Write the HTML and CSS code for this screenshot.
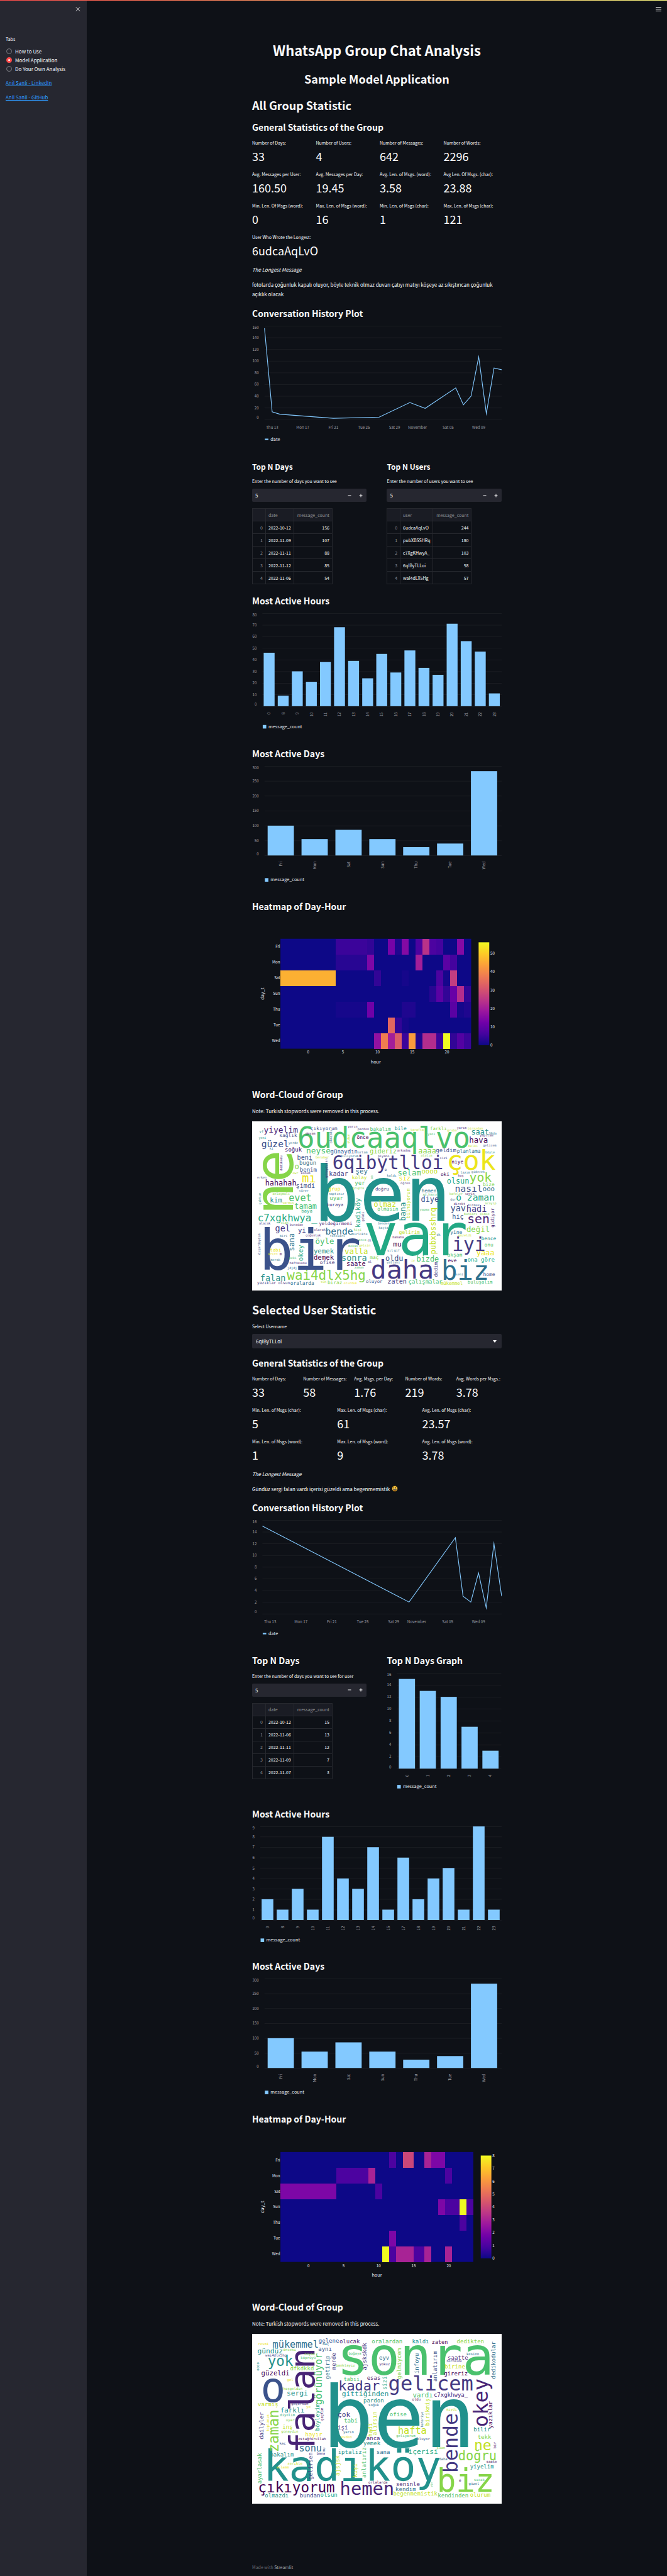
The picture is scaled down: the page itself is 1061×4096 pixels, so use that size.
FILE: index.html
```html
<!DOCTYPE html>
<html lang="en">
<head>
<meta charset="utf-8">
<meta name="viewport" content="width=device-width, initial-scale=1">
<title>WhatsApp Group Chat Analysis</title>
<link rel="stylesheet" href="styles.css">
</head>
<body>
<div class="decoration"></div>
<div class="app">
  <aside class="sidebar">
    <button class="icon-button close" type="button" aria-label="Close sidebar">
      <svg viewBox="0 0 8 8"><path d="M1 1l6 6M7 1l-6 6" fill="none" stroke="currentColor"/></svg>
    </button>
    <fieldset class="tabs">
      <legend>Tabs</legend>
      <label class="tab"><input type="radio" name="tab">How to Use</label>
      <label class="tab"><input type="radio" name="tab" checked>Model Application</label>
      <label class="tab"><input type="radio" name="tab">Do Your Own Analysis</label>
    </fieldset>
    <p class="side-link"><a href="#linkedin">Anil Sanli - LinkedIn</a></p>
    <p class="side-link"><a href="#github">Anil Sanli - GitHub</a></p>
  </aside>

  <main class="main">
    <button class="icon-button menu" type="button" aria-label="Menu">
      <svg viewBox="0 0 10 8"><path d="M0 1.500h9M0 4.500h9M0 7.500h9" fill="none" stroke="currentColor"/></svg>
    </button>
    <div class="content">
      <h1 class="title">WhatsApp Group Chat Analysis</h1>
      <h2 class="header centered">Sample Model Application</h2>

      <h2 class="header">All Group Statistic</h2>
      <h3 class="subheader">General Statistics of the Group</h3>
      <dl class="metrics four">
        <div><dt>Number of Days:</dt><dd>33</dd></div>
        <div><dt>Number of Users:</dt><dd>4</dd></div>
        <div><dt>Number of Messages:</dt><dd>642</dd></div>
        <div><dt>Number of Words:</dt><dd>2296</dd></div>
        <div><dt>Avg. Messages per User:</dt><dd>160.50</dd></div>
        <div><dt>Avg. Messages per Day:</dt><dd>19.45</dd></div>
        <div><dt>Avg. Len. of Msgs. (word):</dt><dd>3.58</dd></div>
        <div><dt>Avg Len. Of Msgs. (char):</dt><dd>23.88</dd></div>
        <div><dt>Min. Len. Of Msgs (word):</dt><dd>0</dd></div>
        <div><dt>Max. Len. of Msgs (word):</dt><dd>16</dd></div>
        <div><dt>Min. Len. of Msgs (char):</dt><dd>1</dd></div>
        <div><dt>Max. Len. of Msgs (char):</dt><dd>121</dd></div>
        <div class="wide"><dt>User Who Wrote the Longest:</dt><dd>6udcaAqLvO</dd></div>
      </dl>
      <p class="text"><em>The Longest Message</em></p>
      <p class="text">fotolarda çoğunluk kapalı oluyor, böyle teknik olmaz duvarı çatıyı matıyı köşeye az sıkıştırıcan çoğunluk açıklık olacak</p>

      <h3 class="subheader">Conversation History Plot</h3>
      <svg class="chart" id="group-history"></svg>

      <div class="columns">
        <section>
          <h4 class="minor">Top N Days</h4>
          <label class="field-label" for="n-days">Enter the number of days you want to see</label>
          <div class="stepper">
            <input id="n-days" type="text" inputmode="numeric" value="5">
            <button type="button" aria-label="Decrease"><svg viewBox="0 0 6 6"><path d="M0.500 3h5" stroke="currentColor"/></svg></button>
            <button type="button" aria-label="Increase"><svg viewBox="0 0 6 6"><path d="M0.500 3h5M3 .5v5" stroke="currentColor"/></svg></button>
          </div>
          <table class="data">
            <thead><tr><th></th><th>date</th><th class="num">message_count</th></tr></thead>
            <tbody>
              <tr><th>0</th><td>2022-10-12</td><td class="num">156</td></tr>
              <tr><th>1</th><td>2022-11-09</td><td class="num">107</td></tr>
              <tr><th>2</th><td>2022-11-11</td><td class="num">88</td></tr>
              <tr><th>3</th><td>2022-11-12</td><td class="num">85</td></tr>
              <tr><th>4</th><td>2022-11-06</td><td class="num">54</td></tr>
            </tbody>
          </table>
        </section>
        <section>
          <h4 class="minor">Top N Users</h4>
          <label class="field-label" for="n-users">Enter the number of users you want to see</label>
          <div class="stepper">
            <input id="n-users" type="text" inputmode="numeric" value="5">
            <button type="button" aria-label="Decrease"><svg viewBox="0 0 6 6"><path d="M0.500 3h5" stroke="currentColor"/></svg></button>
            <button type="button" aria-label="Increase"><svg viewBox="0 0 6 6"><path d="M0.500 3h5M3 .5v5" stroke="currentColor"/></svg></button>
          </div>
          <table class="data users">
            <thead><tr><th></th><th>user</th><th class="num">message_count</th></tr></thead>
            <tbody>
              <tr><th>0</th><td>6udcaAqLvO</td><td class="num">244</td></tr>
              <tr><th>1</th><td>pubXBSSHRq</td><td class="num">180</td></tr>
              <tr><th>2</th><td>c7XgKHwyA_</td><td class="num">103</td></tr>
              <tr><th>3</th><td>6qIByTLLoi</td><td class="num">58</td></tr>
              <tr><th>4</th><td>waI4dLX5Hg</td><td class="num">57</td></tr>
            </tbody>
          </table>
        </section>
      </div>

      <h3 class="subheader after-table">Most Active Hours</h3>
      <svg class="chart" id="group-hours"></svg>
      <h3 class="subheader">Most Active Days</h3>
      <svg class="chart" id="group-days"></svg>
      <h3 class="subheader">Heatmap of Day-Hour</h3>
      <svg class="chart" id="group-heatmap"></svg>
      <h3 class="subheader">Word-Cloud of Group</h3>
      <p class="text">Note: Turkish stopwords were removed in this process.</p>
      <svg class="chart cloud" id="group-cloud"></svg>

      <h2 class="header">Selected User Statistic</h2>
      <label class="field-label" for="username">Select Username</label>
      <div class="select">
        <select id="username"><option>6qIByTLLoi</option><option>6udcaAqLvO</option><option>pubXBSSHRq</option><option>c7XgKHwyA_</option></select>
        <svg class="caret" viewBox="0 0 6 4"><path d="M0 0h6l-3 4z" fill="currentColor"/></svg>
      </div>
      <h3 class="subheader">General Statistics of the Group</h3>
      <dl class="metrics five">
        <div><dt>Number of Days:</dt><dd>33</dd></div>
        <div><dt>Number of Messages:</dt><dd>58</dd></div>
        <div><dt>Avg. Msgs. per Day:</dt><dd>1.76</dd></div>
        <div><dt>Number of Words:</dt><dd>219</dd></div>
        <div><dt>Avg. Words per Msgs.:</dt><dd>3.78</dd></div>
      </dl>
      <dl class="metrics three">
        <div><dt>Min. Len. of Msgs (char):</dt><dd>5</dd></div>
        <div><dt>Max. Len. of Msgs (char):</dt><dd>61</dd></div>
        <div><dt>Avg. Len. of Msgs (char):</dt><dd>23.57</dd></div>
        <div><dt>Min. Len. of Msgs (word):</dt><dd>1</dd></div>
        <div><dt>Max. Len. of Msgs (word):</dt><dd>9</dd></div>
        <div><dt>Avg. Len. of Msgs (word):</dt><dd>3.78</dd></div>
      </dl>
      <p class="text"><em>The Longest Message</em></p>
      <p class="text with-emoji">Gündüz sergi falan vardı içerisi güzeldi ama begenmemistik
        <svg class="emoji" viewBox="0 0 20 20" role="img" aria-label="grinning face"><circle cx="10" cy="10" r="9" fill="#ffc83d" stroke="#2a1d05" stroke-width="1.500"/><ellipse cx="7" cy="7.500" rx="1.200" ry="2" fill="#2a1d05"/><ellipse cx="13" cy="7.500" rx="1.200" ry="2" fill="#2a1d05"/><path d="M4.500 11h11a5.500 5.500 0 0 1-11 0z" fill="#2a1d05"/><path d="M5 11h10v1.600H5z" fill="#fff"/><path d="M7.500 15a3.500 3 0 0 1 5 0 5 5 0 0 1-5 0z" fill="#e8332c"/></svg></p>

      <h3 class="subheader">Conversation History Plot</h3>
      <svg class="chart" id="user-history"></svg>

      <div class="columns">
        <section>
          <h3 class="subheader">Top N Days</h3>
          <label class="field-label" for="n-user-days">Enter the number of days you want to see for user</label>
          <div class="stepper">
            <input id="n-user-days" type="text" inputmode="numeric" value="5">
            <button type="button" aria-label="Decrease"><svg viewBox="0 0 6 6"><path d="M0.500 3h5" stroke="currentColor"/></svg></button>
            <button type="button" aria-label="Increase"><svg viewBox="0 0 6 6"><path d="M0.500 3h5M3 .5v5" stroke="currentColor"/></svg></button>
          </div>
          <table class="data">
            <thead><tr><th></th><th>date</th><th class="num">message_count</th></tr></thead>
            <tbody>
              <tr><th>0</th><td>2022-10-12</td><td class="num">15</td></tr>
              <tr><th>1</th><td>2022-11-06</td><td class="num">13</td></tr>
              <tr><th>2</th><td>2022-11-11</td><td class="num">12</td></tr>
              <tr><th>3</th><td>2022-11-09</td><td class="num">7</td></tr>
              <tr><th>4</th><td>2022-11-07</td><td class="num">3</td></tr>
            </tbody>
          </table>
        </section>
        <section>
          <h3 class="subheader">Top N Days Graph</h3>
          <svg class="chart" id="user-top"></svg>
        </section>
      </div>

      <h3 class="subheader">Most Active Hours</h3>
      <svg class="chart" id="user-hours"></svg>
      <h3 class="subheader">Most Active Days</h3>
      <svg class="chart" id="user-days"></svg>
      <h3 class="subheader">Heatmap of Day-Hour</h3>
      <svg class="chart" id="user-heatmap"></svg>
      <h3 class="subheader">Word-Cloud of Group</h3>
      <p class="text">Note: Turkish stopwords were removed in this process.</p>
      <svg class="chart cloud" id="user-cloud"></svg>

      <footer class="footer">Made with <a href="#streamlit">Streamlit</a></footer>
    </div>
  </main>
</div>
<script src="charts.js"></script>
</body>
</html>
```

FILE: styles.css
```css
* { box-sizing: border-box; }

body {
  margin: 0;
  background: #0e1117;
  color: #fafafa;
  font-family: "Noto Sans CJK SC", "Noto Sans", sans-serif;
  font-size: 8px;
  line-height: 15px;
}

h1, h2, h3, h4, p, dl, dd { margin: 0; }

.decoration {
  position: absolute;
  top: 0;
  left: 0;
  right: 0;
  height: 1px;
  background: linear-gradient(90deg, #ff4b4b, #fffd80);
}

.app { display: flex; min-height: 100vh; }

/* Sidebar */
.sidebar { flex: 0 0 13%; background: #262730; padding: 10px 9px; }

.icon-button {
  display: block;
  padding: 0;
  border: 0;
  background: none;
  color: #fafafa;
}
.icon-button svg { display: block; }
.close { margin: 0 0 0 auto; width: 9px; height: 9px; }
.close svg { width: 8px; height: 9px; }

.tabs { margin: 37px 0 0; padding: 0; border: 0; }
.tabs legend { padding: 0; font-size: 7px; line-height: 13px; margin-bottom: 5px; }
.tab { display: flex; align-items: center; gap: 5px; height: 14px; padding-left: 1px; white-space: nowrap; }
.tab input {
  appearance: none;
  margin: 0;
  width: 9px;
  height: 9px;
  border: 1px solid #7f8086;
  border-radius: 50%;
}
.tab input:checked { border: 3px solid #ff4b4b; background: #fff; }
.side-link { margin-top: 8px; }
.side-link a { color: #2e9aff; }

/* Main column */
.main { flex: 1; min-width: 0; position: relative; }
.menu { position: absolute; top: 10px; right: 8px; width: 10px; height: 8px; }
.menu svg { width: 10px; height: 8px; }
.content { max-width: 397px; margin: 0 auto; padding: 54px 0 7px; }

.title { padding: 10px 0; font-size: 22px; line-height: 30px; text-align: center; font-weight: 700; }
.header { padding: 9px 0; font-size: 18px; line-height: 24px; font-weight: 600; }
.centered { text-align: center; }
.subheader { padding: 5px 0 9px; font-size: 14px; line-height: 19px; font-weight: 600; }
.minor { padding: 5px 0 9px; font-size: 12px; line-height: 16px; font-weight: 600; }
.after-table { margin-top: 3px; }
.text { margin-bottom: 9px; }
.with-emoji { display: flex; align-items: center; gap: 3px; height: 14px; }

.metrics { display: grid; column-gap: 9px; }
.four { grid-template-columns: repeat(4, 1fr); }
.five { grid-template-columns: repeat(5, 1fr); }
.three { grid-template-columns: repeat(3, 1fr); }
.metrics div { min-width: 0; padding-bottom: 9px; }
.metrics .wide { grid-column: 1 / -1; }
.metrics dt { font-size: 7px; line-height: 13px; white-space: nowrap; }
.metrics dd { font-size: 18px; line-height: 28px; }

.columns { display: grid; grid-template-columns: 1fr 1fr; column-gap: 32px; }

.field-label { display: block; margin-bottom: 5px; font-size: 7px; line-height: 13px; }

.stepper { display: flex; height: 21px; margin-bottom: 10px; border-radius: 2px; background: #262730; }
.stepper input {
  flex: 1;
  min-width: 0;
  padding: 0 5px;
  border: 0;
  background: none;
  color: inherit;
  font: inherit;
}
.stepper button {
  display: grid;
  place-items: center;
  width: 18px;
  padding: 0;
  border: 0;
  background: none;
  color: #fafafa;
}
.stepper svg { width: 6px; height: 6px; }

.data { width: 128px; margin-bottom: 9px; border-collapse: collapse; font-size: 7px; line-height: 12px; }
.data.users { width: 135px; }
.data th, .data td { height: 20px; padding: 0 4px; border: 1px solid #26282e; font-weight: 400; text-align: left; }
.data th { color: #8f9196; }
.data thead th { background: #1a1c24; }
.data th:first-child { width: 21px; text-align: right; }
.data .num { width: 61px; text-align: right; }

.select { position: relative; margin-bottom: 9px; }
.select select {
  display: block;
  appearance: none;
  width: 100%;
  height: 23px;
  padding: 0 6px;
  border: 0;
  border-radius: 2px;
  background: #262730;
  color: inherit;
  font: inherit;
}
.caret { position: absolute; right: 8px; top: 10px; width: 6px; height: 4px; }

.emoji { width: 10px; height: 10px; }

/* Charts */
.chart { display: block; width: 100%; margin-bottom: 9px; }
.chart text { font-size: 11px; fill: #e6eaf1; }
.chart .axis { fill: #9a9ba0; }
.chart .legend { font-size: 13px; }
.chart .axis-title { font-size: 13px; }
.grid { stroke: #26282d; stroke-width: 1; }
.line { fill: none; stroke: #83c9ff; stroke-width: 2; stroke-miterlimit: 10; }
.bar { fill: #83c9ff; }
.cloud { background: #fff; }
.cloud text { font-family: "DejaVu Sans Mono", monospace; }

.footer { margin-top: 95px; font-size: 7px; line-height: 12px; color: #6a6c72; }
.footer a { color: #a3a8b4; text-decoration: none; }
```

FILE: charts.js
```js
const NS = "http://www.w3.org/2000/svg";
const DAYS = ["Fri", "Mon", "Sat", "Sun", "Thu", "Tue", "Wed"];

function add(parent, tag, attrs, text) {
  const node = document.createElementNS(NS, tag);
  for (const key in attrs) node.setAttribute(key, attrs[key]);
  if (text !== undefined) node.textContent = text;
  parent.appendChild(node);
  return node;
}

function open(id, width, height) {
  const svg = document.getElementById(id);
  svg.setAttribute("viewBox", `0 0 ${width} ${height}`);
  return svg;
}

/* Horizontal grid lines and value labels; returns the value-to-y function. */
function valueAxis(svg, c) {
  const y = v => c.top + c.plot * (1 - v / c.max);
  for (let v = 0; v <= c.max; v += c.step) {
    const line = Math.round(y(v)) + 0.5;
    add(svg, "line", { class: "grid", x1: c.left, x2: c.width, y1: line, y2: line });
    const shift = v === 0 ? -1 : v === c.max ? 8 : 4;
    add(svg, "text", { class: "axis", x: c.left - 16, y: y(v) + shift, "text-anchor": "end" }, v);
  }
  return y;
}

function legend(svg, c, name, h) {
  const y = c.top + c.plot + c.legend;
  add(svg, "rect", { class: "bar", x: c.left + 1, y: y - h / 2, width: 10, height: h });
  add(svg, "text", { class: "legend", x: c.left + 17, y: y + 4 }, name);
}

/* Points are [days since 12 October, message count]. */
function lineChart(id, c, points) {
  c = Object.assign({ width: 704, top: 2, plot: 264, height: 356 }, c);
  const svg = open(id, c.width, c.height);
  const y = valueAxis(svg, c);
  const x = d => c.left + (c.width - c.left) * d / 31;
  const ticks = { 1: "Thu 13", 5: "Mon 17", 9: "Fri 21", 13: "Tue 25", 17: "Sat 29", 20: "November", 24: "Sat 05", 28: "Wed 09" };
  for (const d in ticks) {
    add(svg, "text", { class: "axis", x: x(d), y: c.top + c.plot + 26, "text-anchor": "middle" }, ticks[d]);
  }
  add(svg, "polyline", { class: "line", points: points.map(p => `${x(p[0])},${y(p[1])}`).join(" ") });
  legend(svg, c, "date", 4);
}

function barChart(id, c, labels, values) {
  c = Object.assign({ width: 704, top: 2, plot: 264, height: 356 }, c);
  const svg = open(id, c.width, c.height);
  const y = valueAxis(svg, c);
  const band = (c.width - c.left) / values.length;
  const bar = band * 0.775;
  values.forEach((v, i) => {
    const mid = c.left + band * (i + 0.48);
    add(svg, "rect", { class: "bar", x: mid - bar / 2, y: y(v), width: bar, height: y(0) - y(v) });
    const ly = y(0) + 17;
    add(svg, "text", { class: "axis", x: mid + 4, y: ly, "text-anchor": "end", transform: `rotate(-90 ${mid + 4} ${ly})` }, labels[i]);
  });
  legend(svg, c, "message_count", 10);
}

const PLASMA = ["0d0887", "46039f", "7201a8", "9c179e", "bd3786", "d8576b", "ed7953", "fb9f3a", "fdca26", "f0f921"];

function plasma(t) {
  const p = Math.min(t * 9, 8.999), i = Math.floor(p), f = p - i;
  const part = (hex, k) => parseInt(hex.substr(k * 2, 2), 16);
  return "rgb(" + [0, 1, 2].map(k => Math.round(part(PLASMA[i], k) * (1 - f) + part(PLASMA[i + 1], k) * f)).join(",") + ")";
}

/* rows[day] maps an hour to its message count. */
function heatmap(id, c, hours, rows) {
  const svg = open(id, 704, c.height);
  const left = 80, plot = 310, rowH = plot / 7;
  const x = h => left + (h + 4) * (c.right - left) / 27.5;
  add(svg, "rect", { x: left, y: c.top, width: c.right - left, height: plot, fill: plasma(0) });
  DAYS.forEach((day, r) => {
    hours.forEach((h, i) => {
      const v = rows[day][h];
      if (!v) return;
      const from = i ? (hours[i - 1] + h) / 2 : -4;
      const to = i < hours.length - 1 ? (h + hours[i + 1]) / 2 : 23.5;
      add(svg, "rect", { x: x(from), y: c.top + r * rowH, width: x(to) - x(from), height: rowH, fill: plasma(v / c.max), "shape-rendering": "crispEdges" });
    });
    add(svg, "text", { x: left - 1, y: c.top + (r + 0.5) * rowH + 4, "text-anchor": "end" }, day);
  });
  const bottom = c.top + plot;
  for (const h of [0, 5, 10, 15, 20]) add(svg, "text", { x: x(h), y: bottom + 14, "text-anchor": "middle" }, h);
  add(svg, "text", { class: "axis-title", x: (left + c.right) / 2, y: bottom + 41, "text-anchor": "middle" }, "hour");
  const my = c.top + plot / 2;
  add(svg, "text", { class: "axis-title", x: 33, y: my, "text-anchor": "middle", transform: `rotate(-90 33 ${my})` }, "day_t");
  const g = add(add(svg, "defs", {}), "linearGradient", { id: id + "-scale", x1: 0, x2: 0, y1: 1, y2: 0 });
  PLASMA.forEach((hex, i) => add(g, "stop", { offset: i / 9, "stop-color": "#" + hex }));
  const barX = c.right + 21;
  add(svg, "rect", { x: barX, y: c.top + 10, width: 30, height: 290, fill: `url(#${id}-scale)` });
  for (let v = 0; v <= c.max; v += c.step) {
    add(svg, "text", { x: barX + 33, y: c.top + 304 - 290 * v / c.max }, v);
  }
}

const VIRIDIS = {
  P: "#440154", p: "#482475", i: "#443983", b: "#3b528b", t: "#2d708e", c: "#21918c",
  g: "#22a884", G: "#4ac16d", l: "#86d549", L: "#c2df23", y: "#ece51b"
};

/*
 * Each line reads: word | ink start | ink end | baseline | colour [| v].
 * Words marked v read upwards. The layout grid (c.grid) is projected onto the image.
 */
function cloud(id, c, source) {
  const width = 704, height = 478, [gx, gy, gr, gb] = c.grid;
  const svg = open(id, width, height);
  const sx = width / (gr - gx), sy = height / (gb - gy);
  for (const line of source.trim().split("\n")) {
    const [word, a, b, base, colour, upright] = line.trim().split("|");
    const length = Math.abs(b - a) * (upright ? sy : sx);
    const size = Math.max(6, Math.round(length / (word.length * 0.602 - 0.1)));
    const pad = size * 0.05;
    const x = upright ? (base - gx) * sx : (a - gx) * sx - pad;
    const y = upright ? (a - gy) * sy + pad : (base - gy) * sy;
    const attrs = { x: x.toFixed(1), y: y.toFixed(1), style: `font-size:${size}px;fill:${VIRIDIS[colour]}` };
    if (upright) attrs.transform = `rotate(-90 ${attrs.x} ${attrs.y})`;
    add(svg, "text", attrs, word);
  }
}

lineChart("group-history", { left: 35, max: 160, step: 20, height: 360, legend: 56 },
  [[0, 156], [1, 13], [2, 9], [9, 2], [15, 4], [19, 29], [21, 19], [25, 54], [26, 25], [27, 40], [28, 107], [29, 10], [30, 88], [31, 85]]);

barChart("group-hours", { left: 29, plot: 262, max: 80, step: 10, legend: 58 },
  [0, 8, 9, 10, 11, 12, 13, 14, 15, 16, 17, 18, 19, 20, 21, 22, 23],
  [46, 9, 30, 21, 38, 68, 39, 24, 45, 29, 48, 33, 27, 71, 56, 47, 11]);

const weekdays = [100, 55, 86, 55, 28, 40, 283];
barChart("group-days", { left: 35, plot: 252, max: 300, step: 50, legend: 69 }, DAYS, weekdays);
barChart("user-days", { left: 35, plot: 252, max: 300, step: 50, legend: 69 }, DAYS, weekdays);

heatmap("group-heatmap", { right: 618, top: 58, max: 56, step: 10, height: 456 },
  [0, 8, 9, 10, 11, 12, 13, 14, 15, 16, 17, 18, 19, 20, 21, 22, 23], {
    Fri: { 8: 5, 9: 4, 12: 13, 13: 2, 14: 15, 16: 7, 17: 24, 18: 7, 19: 6, 22: 15 },
    Mon: { 8: 3, 9: 14, 16: 20, 20: 9, 21: 6 },
    Sat: { 0: 46, 10: 4, 14: 1, 19: 7, 20: 1, 21: 26 },
    Sun: { 18: 3, 19: 9, 20: 4, 21: 11, 22: 23, 23: 4 },
    Thu: { 8: 1, 9: 12, 14: 2, 15: 2, 21: 9, 22: 1, 23: 2 },
    Tue: { 12: 34, 13: 4, 14: 1 },
    Wed: { 10: 17, 11: 38, 12: 20, 13: 32, 14: 5, 15: 43, 16: 2, 17: 23, 18: 23, 19: 5, 20: 56, 21: 4, 22: 8, 23: 5 }
  });

lineChart("user-history", { left: 29, max: 16, step: 2, legend: 56 },
  [[0, 15], [19, 2], [25, 13], [26, 3], [27, 2], [28, 7], [29, 1], [30, 12], [31, 3]]);

barChart("user-top", { width: 324, left: 29, plot: 270, max: 16, step: 2, legend: 51, height: 358 },
  [0, 1, 2, 3, 4], [15, 13, 12, 7, 3]);

barChart("user-hours", { left: 23, max: 9, step: 1, legend: 57 },
  [0, 8, 9, 10, 11, 12, 13, 14, 16, 17, 18, 19, 20, 21, 22, 23],
  [2, 1, 3, 1, 8, 4, 3, 7, 1, 6, 2, 4, 5, 1, 9, 1]);

heatmap("user-heatmap", { right: 624, top: 60, max: 8, step: 1, height: 456 },
  [0, 8, 9, 10, 11, 12, 13, 14, 16, 17, 18, 19, 20, 21, 22, 23], {
    Fri: { 12: 1, 14: 4, 17: 3, 18: 2, 19: 2 },
    Mon: { 8: 1, 9: 3, 20: 1 },
    Sat: { 0: 2, 10: 1 },
    Sun: { 19: 2, 20: 1, 21: 1, 22: 8, 23: 1 },
    Thu: { 22: 1 },
    Tue: { 12: 2 },
    Wed: { 11: 8, 12: 1, 13: 3, 14: 3, 16: 1, 17: 3, 20: 3 }
  });

cloud("group-cloud", { grid: [60, 112, 1476, 1449] }, `
ben|430|1168|897|c
var|708|1266|1168|g
bir|117|661|1284|b
6udcaaqlvo|325|1285|322|G
6qibytlloi|521|1140|489|i
ne|828|360|293|l|v
çok|1171|1436|496|y
daha|740|1082|1354|i
biz|1141|1400|1361|t
wai4dlx5hg|261|706|1364|l
c7xgkhwya_|94|425|899|g
iyi|1201|1378|1133|i
vf|102|124|203|c
yiyelim|128|317|200|p
sağlık|216|312|238|b
yeni|98|142|251|c
güzel|115|265|314|b
yerde|267|321|292|t
ki|160|180|337|t
soğuk|247|338|351|P
çıkıyorum|392|538|181|b
devam|365|418|214|P
yarın|604|657|164|p
pardon|659|724|184|i
bakalım|730|842|188|G
bile|870|934|181|c
tarafta|959|1034|188|L
farklı|1071|1166|182|l
gruba|1168|1221|189|L
yarım|1223|1278|172|p
birazdan|1284|1370|176|L
saat|1305|1401|216|c
30da|1404|1447|214|t
yapıcam|1353|1430|230|p
önce|655|720|251|P
yani|1057|1100|223|G
hava|1294|1398|283|P
belki|1288|1341|317|L
gelicem|1371|1447|310|b
neyse|369|501|367|G
günaydın|506|657|364|b
ortam|661|715|364|t
gideriz|730|883|365|l
arkadaş|884|959|348|p
aaaa|1005|1102|366|l
geldim|1104|1216|356|b
planlama|1223|1352|358|t
böyle|1384|1436|364|c
beni|317|402|414|b
beraber|421|496|404|L
bugün|329|422|456|t
o|303|325|488|l
benim|332|425|508|b
owr|291|321|529|L
konum|337|390|529|p
erken|89|142|561|b
hahahah|136|308|616|P
mı|346|420|592|y
şimdi|310|416|640|b
sürer|327|378|669|t
biliyorum|566|664|397|t
piyano|774|839|396|i
alalım|1018|1083|388|l
sizi|1126|1168|409|i
niye|1193|1257|443|P
kadar|498|605|541|i
şey|649|714|525|t
e|813|824|505|b
selam|888|1019|540|G
oooo|1023|1110|524|L
oki|1131|1178|543|P
lazım|1243|1296|525|t
gidecek|1305|1380|521|t
hoş|1229|1261|549|P
kolay|628|708|567|L
kaldı|826|877|551|t
siz|895|958|580|y
olsun|1167|1289|602|g
yok|1296|1417|587|l
yer|644|699|611|G
öğren|903|956|607|i
grup|495|558|657|y
grupta|631|696|647|l
doğru|760|839|658|i
hemen|1023|1104|671|t
xd hayır|1028|1115|695|G
bize|1370|1433|624|l
nasıl|1213|1364|668|b
ooo|1370|1435|664|t
anlaşmalı|177|273|694|l
naptınız|496|581|690|t
uyar|501|574|733|G
diye|1020|1119|747|b
kafeler|1180|1254|692|l
serin|1269|1321|691|P
dur|1185|1216|735|t
o zaman|1219|1435|739|g
kim|163|228|753|c
varmış|233|296|763|L
evet|270|397|744|G
tamam|302|425|802|G
buraya|485|580|781|i
olmaz|752|873|787|L
olmasın|772|884|815|G
yapma|1012|1063|818|G
direkt|1205|1269|770|P
bitmez|1286|1350|780|b
acayip|1382|1446|767|l
baya|340|402|831|g
yav|1188|1272|822|b
hadi|1278|1390|825|i
hiç|1197|1260|881|b
bunları|1263|1339|853|l
kimse|1354|1406|853|l
sen|1284|1404|917|p
alacak|100|164|924|i
olan|224|267|920|l
buradan|274|350|936|p
yeldeğirmeni|441|634|932|p
benden|775|839|928|t
kaçta|779|832|958|t
gel|193|274|980|i
yi|322|364|991|i
olarak|412|475|977|p
bende|478|630|1004|t
kişi|638|680|975|l
değil|1278|1407|987|l
biri|218|260|1026|t
çoğunluk|364|449|1018|p
fotoları|501|586|1025|t
birlikte|629|716|1009|t
gelirim|895|1007|1001|L
yine|1186|1249|1001|t
güzeldi|1231|1307|1021|L
dk|1108|1128|1017|t
hahaha|857|922|1033|P
bence|1362|1442|1047|c
onu|1379|1427|1099|G
öyle|421|521|1080|G
anca|665|709|1056|G
di|716|737|1058|i
mekan|607|661|1102|G
gelsin|667|732|1098|L
mu|862|906|1097|P
yemek|411|521|1154|c
valla|587|718|1159|L
yıl|828|859|1137|t
gif|866|898|1137|t
tabi|163|225|1137|y
geçen|152|205|1163|y
m|217|228|1170|P
merak|166|219|1213|t
peki|270|313|1198|G
demek|411|521|1204|P
sonra|569|708|1213|c
maç|729|776|1196|l
oldu|818|916|1211|b
iy|963|984|1217|L
bizde|995|1119|1216|G
akşam|1169|1249|1178|G
yaaa|1335|1432|1168|y
eve|1172|1220|1222|P
ona göre|1283|1435|1217|g
haftasonu|273|371|1236|p
ofise|446|526|1237|i
saate|597|705|1254|P
al|717|738|1226|i
vallahi|824|900|1231|t
zaman|641|694|1273|G
jdjdj|261|313|1279|t
falan|108|247|1370|c
yazıklar olsun|90|270|1396|i
oralarda|278|407|1403|t
tüh|450|482|1389|L
biraz|489|569|1397|l
oturduk|581|656|1399|y
oluyor|707|800|1387|b
zaten|830|938|1393|i
çalışmalar|948|1134|1390|G
mükemmel|1131|1259|1402|L
seni|1216|1258|1326|t
home|1372|1435|1334|b
buluşalım|1284|1428|1391|G
dedikodu|500|380|232|p|v
olmazdı|284|180|512|t|v
oldun|287|211|613|L|v
günaydınnn|556|405|487|p|v
aa|567|538|745|G|v
kadıköy|948|716|674|g|v
geldi|901|828|696|i|v
bana|895|751|930|c|v
bilmiyorum|875|646|954|L|v
pubxbsshrq|1158|787|1103|L|v
çıktım|767|675|110|c|v
gidiyor|947|797|1432|p|v
dışardaydım|1162|993|106|b|v
sana|1133|1000|300|t|v
okey|1211|1089|350|g|v
dedim|1338|1225|1114|i|v
`);

cloud("user-cloud", { grid: [60, 121, 1476, 1131] }, `
ben|483|1303|797|c
kadıköy|137|1120|996|c
sonra|557|1418|366|G
falan|823|215|414|p|v
o|120|238|527|b
gelicem|838|1308|459|i
kadar|553|784|458|i
biz|1117|1427|1062|l
hemen|563|860|1079|p
çıkıyorum|98|531|1064|P
bende|943|598|1228|i|v
okey|670|393|1397|p|v
resmi|95|153|189|y
mükemmel|179|437|204|t
gündüz|92|231|238|c
öncesi|238|307|224|l
wai4dlx5hg|136|250|256|i
neyse|358|415|247|l
köprüyü|337|416|271|G
yok|152|290|314|c
dfkdkkd|277|409|340|l
güzeldi|114|274|367|P
gelene|439|551|175|b
maç|461|496|189|t
aynı|437|510|224|b
olucak|557|669|178|p
oralardan|740|909|178|G
kaldı|969|1061|178|c
zaten|1081|1171|182|P
dedikten|1223|1374|178|l
boğaya|608|676|245|G
eyv|782|838|273|t
yokuz|782|838|309|p
banktayiz|536|639|317|l
saatte|1171|1281|275|p
kesinn|1277|1345|248|t
herhalde|1165|1255|290|i
birine|1154|1266|326|L
gireriz|1150|1281|369|P
gel|259|292|401|y
hoşgeldin|238|342|454|l
sergi|258|373|488|c
tabii|581|671|402|G
esas|713|786|395|p
gittiğinden|571|830|491|c
vardı|973|1086|501|G
c7xgkhwya_|1092|1282|495|p
oldu|969|1015|520|P
pardon|693|805|530|c
soğuk|721|777|553|t
varmış|94|207|552|L
geçersin|283|374|544|i
ye|369|391|562|y
farklı|222|357|590|c
diyelim|219|299|611|g
uyar|253|299|641|l
inş|234|288|687|L
günaydın|226|318|710|l
hayır|363|455|731|y
estağfurullah|323|471|754|P
kaç|216|249|781|b
sonu|328|452|823|t
çok|547|614|615|i
tabi|583|655|650|G
ofise|842|935|612|G
miydi|1163|1220|577|L
işi|547|603|692|p
yarın|578|634|712|t
evden|567|624|742|y
hafta|890|1046|717|L
geliyorum|879|983|735|G
oluyor|997|1065|753|b
anca|710|782|756|p
yemek|693|785|783|c
bilir|1318|1410|703|c
tekk|1341|1414|745|l
ne|1323|1413|814|L
bakalım|163|297|850|c
bana|427|472|842|i
iptaliz|549|678|836|c
sana|767|839|836|t
içerisi|948|1112|836|g
şuan|1108|1153|808|l
daha|1121|1167|873|t
doğru|1233|1445|874|l
saate|1390|1447|891|P
yiyelim|1298|1430|924|c
serikle|262|343|901|L
selamm|198|266|924|y
ortalarda|721|825|1011|P
seninle|878|1010|1027|p
kendim|875|988|1056|t
e|1235|1246|1001|p
sıcak|1320|1376|999|G
güzel|1290|1347|1021|t
olmazdı|134|265|1094|c
bundan|332|444|1094|i
olsun|449|542|1092|g
begenmemistik|862|1110|1084|L
kendinden|1115|1284|1094|G
olurum|1298|1411|1090|L
görünüyor|542|237|457|G|v
nerde|334|235|535|i|v
getirip|390|252|498|t|v
ajskskdk|335|178|710|i|v
gelmiycem|388|210|905|l|v
infoyu|356|238|1005|t|v
anlatırım|404|224|1108|b|v
dedikodular|388|170|1442|t|v
sizi|453|376|824|g|v
oooo|340|289|101|c|v
zaman|822|578|211|l|v
dailyler|748|591|124|i|v
toplanın|702|605|155|y|v
böyleyim|697|542|440|g|v
geçtim|637|566|464|P|v
birikmiş|667|511|1067|L|v
bahariye|676|582|1031|t|v
yazıklar|682|525|1423|P|v
hadi|732|655|740|L|v
alırsın|724|586|765|L|v
mu|823|799|475|b|v
bir|802|766|1443|P|v
ayarlasak|1012|835|113|G|v
gelirsen|988|828|402|i|v
ajsjsk|965|845|556|L|v
kişi|973|896|657|L|v
anlatırız|977|801|706|G|v
var|1033|1000|1084|G|v
`);
```
